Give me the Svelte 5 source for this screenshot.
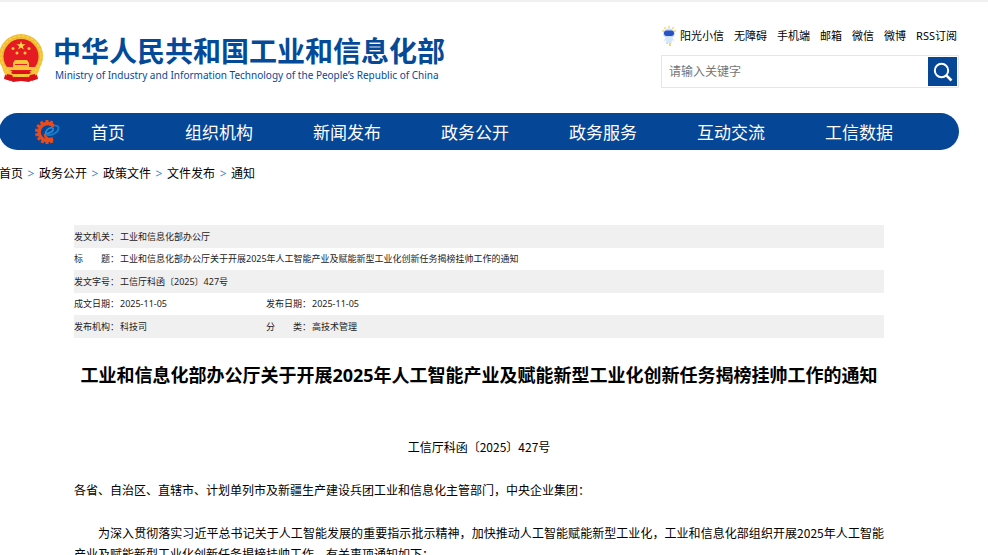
<script lang="ts">
	const quickLinks = ["阳光小信", "无障碍", "手机端", "邮箱", "微信", "微博", "RSS订阅"]
	const navItems = ["首页", "组织机构", "新闻发布", "政务公开", "政务服务", "互动交流", "工信数据"]
	const crumbs = ["首页", "政务公开", "政策文件", "文件发布", "通知"]

	type Field = { label: string, value: string }

	const fields: Field[][] = [
		[{ label: "发文机关：", value: "工业和信息化部办公厅" }],
		[{ label: "标　　题：", value: "工业和信息化部办公厅关于开展2025年人工智能产业及赋能新型工业化创新任务揭榜挂帅工作的通知" }],
		[{ label: "发文字号：", value: "工信厅科函〔2025〕427号" }],
		[{ label: "成文日期：", value: "2025-11-05" }, { label: "发布日期：", value: "2025-11-05" }],
		[{ label: "发布机构：", value: "科技司" }, { label: "分　　类：", value: "高技术管理" }],
	]

	// gear teeth, left open on the right where the swoosh leaves
	const teeth = [0, 25, 155, 180, 205, 230, 255, 280, 305, 330]

	let keyword = $state("")
</script>

<div class="page">
	<header>
		<a class="brand" href="#home">
			{@render emblem()}
			<span class="names">
				<strong>中华人民共和国工业和信息化部</strong>
				<span>Ministry of Industry and Information Technology of the People’s Republic of China</span>
			</span>
		</a>
		<div class="tools">
			<div class="quick">
				{@render mascot()}
				{#each quickLinks as link}
					<a href="#{link}">{link}</a>
				{/each}
			</div>
			<form class="search" onsubmit={(e) => e.preventDefault()}>
				<input type="text" aria-label="搜索" placeholder="请输入关键字" bind:value={keyword} />
				<button aria-label="搜索">
					<svg viewBox="0 0 20 20" width="20" height="20" fill="none" stroke="#fff" stroke-width="2">
						<circle cx="8.5" cy="8.5" r="6.7" />
						<path d="M13.3 13.3 18.5 18.5" stroke-width="2.6" />
					</svg>
				</button>
			</form>
		</div>
	</header>

	<nav class="main-nav">
		{@render gear()}
		{#each navItems as item}
			<a href="#{item}">{item}</a>
		{/each}
	</nav>

	<nav class="crumbs" aria-label="当前位置">
		{#each crumbs as crumb, i}
			{#if i > 0}<span>&gt;</span>{/if}
			<a href="#{crumb}">{crumb}</a>
		{/each}
	</nav>

	<main>
		<table>
			<colgroup><col class="key"><col class="short"><col class="key"><col></colgroup>
			<tbody>
				{#each fields as row}
					<tr>
						{#each row as field}
							<th scope="row">{field.label}</th>
							<td colspan={row.length === 1 ? 3 : 1}>{field.value}</td>
						{/each}
					</tr>
				{/each}
			</tbody>
		</table>

		<h1>工业和信息化部办公厅关于开展2025年人工智能产业及赋能新型工业化创新任务揭榜挂帅工作的通知</h1>

		<article lang="zh-CN">
			<p class="number">工信厅科函〔2025〕427号</p>
			<p>各省、自治区、直辖市、计划单列市及新疆生产建设兵团工业和信息化主管部门，中央企业集团：</p>
			<p class="indent">为深入贯彻落实习近平总书记关于人工智能发展的重要指示批示精神，加快推动人工智能赋能新型工业化，工业和信息化部组织开展2025年人工智能产业及赋能新型工业化创新任务揭榜挂帅工作。有关事项通知如下：</p>
		</article>
	</main>
</div>

{#snippet emblem()}
	<svg class="emblem" viewBox="0 0 44 49" width="44" height="49" aria-hidden="true">
		<path d="M7 36 5 45l6 1 3 2 8-1 8 1 3-2 6-1-2-9z" fill="#d9121a" />
		<circle cx="22" cy="22" r="22" fill="#efbd2f" />
		<circle cx="22" cy="22" r="20" fill="none" stroke="#f7d050" stroke-width="1.5" stroke-dasharray="3 1.5" />
		<circle cx="22" cy="22.500" r="17.500" fill="#e41b22" />
		<path d="m22 7 1.100 3.200h3.400l-2.700 2 1 3.300-2.800-2-2.800 2 1-3.300-2.700-2h3.400z" fill="#ffdf43" />
		<g fill="#f9c63a">
			<circle cx="14" cy="14.500" r="1.500" /><circle cx="30" cy="14.500" r="1.500" />
			<circle cx="18" cy="19" r="1.500" /><circle cx="26" cy="19" r="1.500" />
			<path d="M16 26h12l2 3H14zM14 29h16v4H14zM7 33h30l-2 3H9z" />
			<path d="M3 32c4 5 8 7 12 6h14c4 1 8-1 12-6-1 7-4 11-9 13l-4-3H16l-4 3C7 43 4 39 3 32z" />
		</g>
		<path d="M14 37h16l2 2-2 1H14l-2-1zM8 40l5 1 2 4-4 2-5-2zM36 40l-5 1-2 4 4 2 5-2zM17 43h10l2 4H15z" fill="#d9121a" />
		<path d="M16 30.500h12" stroke="#e41b22" />
	</svg>
{/snippet}

{#snippet mascot()}
	<svg class="mascot" viewBox="0 0 14 20" width="14" height="20" aria-hidden="true">
		<g fill="#f8d66a">
			<circle cx="3" cy="2" r="1" /><circle cx="7" cy="1" r="1" /><circle cx="11" cy="2" r="1" />
			<circle cx="1" cy="5" r="1" /><circle cx="13" cy="5" r="1" />
			<path d="M4 15h2v3H4zM7 16h2v4H7z" />
		</g>
		<ellipse cx="7" cy="7.500" rx="6" ry="5" fill="#c9dcf6" />
		<rect x="2" y="4.500" width="10" height="5.500" rx="2.700" fill="#2852c4" />
		<path d="M4 11h6l3 5-3-2v3H4v-3l-3 2z" fill="#d7e7f8" />
	</svg>
{/snippet}

{#snippet gear()}
	<svg class="gear" viewBox="0 0 26 26" width="26" height="26" fill="none" aria-hidden="true">
		<g fill="#e84c1e">
			{#each teeth as angle}
				<rect x="10.500" y="1" width="3" height="4" transform="rotate({angle} 12 13)" />
			{/each}
		</g>
		<path d="M19 7.500A8.500 8.500 0 1 0 17.500 20" stroke="#e84c1e" stroke-width="3.500" />
		<path d="M10 15c0 4 3.500 6 8 4.500" stroke="#e84c1e" stroke-width="2.500" />
		<path d="M10.500 15.500c-.5-3.500 2.500-6.300 5.500-6.700 2.700-.2 3 2.200 1 3.700-1.800 1.400-4 2-6.500 2.200" stroke="#2a8fd8" stroke-width="1.600" />
		<path d="M11 15.500c5 2 12.500-2 12.500-6.500 0-1.800-1.700-2.600-3.500-2.200" stroke="#1878c4" stroke-width="2" />
	</svg>
{/snippet}

<style>
	:global(body) {
		margin: 0;
		background: #fff;
		border-top: 2px solid #f0f0f0;
		font-family: "Noto Sans", "Noto Sans CJK SC", sans-serif;
		color: #000;
	}

	a {
		color: inherit;
		text-decoration: none;
	}

	/* the page box hangs slightly over the left edge of the window */
	.page {
		margin: 0 29px 0 -1px;
	}

	header {
		display: flex;
		justify-content: space-between;
		align-items: flex-start;
		height: 87px;
		padding: 24px 2px 0 0;
	}

	.brand {
		display: flex;
		gap: 10px;
		padding-top: 8px;
		color: #054a98;
		white-space: nowrap;
	}

	.names {
		display: flex;
		flex-direction: column;

		& strong {
			font-size: 28px;
			line-height: 34px;
		}

		& span {
			font-size: 10px;
			line-height: 14px;
			padding-left: 2px;
		}
	}

	.tools {
		width: 296px;
	}

	.quick {
		display: flex;
		justify-content: flex-end;
		align-items: center;
		gap: 10px;
		font-size: 11px;
		line-height: 20px;
		white-space: nowrap;
	}

	.mascot {
		margin-right: -6px;
	}

	.search {
		display: flex;
		align-items: center;
		box-sizing: border-box;
		height: 33px;
		margin: 9px -2px 0 0;
		padding-right: 1px;
		border: 1px solid #e6e6e6;

		& input {
			flex: 1;
			min-width: 0;
			padding: 0 7px;
			border: none;
			outline: none;
			font: 12px/20px "Noto Sans", "Noto Sans CJK SC", sans-serif;

			&::placeholder { color: #757575; }
		}

		& button {
			display: grid;
			place-items: center;
			width: 29px;
			height: 29px;
			padding: 0;
			border: none;
			background: #054696;
		}
	}

	.main-nav {
		display: flex;
		align-items: center;
		gap: 60px;
		height: 37px;
		padding-left: 36px;
		border-radius: 19px;
		background: #054696;
		color: #fff;
		font-size: 17px;
		white-space: nowrap;
	}

	.gear {
		margin-right: -30px;
	}

	.crumbs {
		display: flex;
		margin-top: 14px;
		font-size: 12px;
		line-height: 20px;

		& span {
			width: 16px;
			text-align: center;
			color: #4c86b8;
		}
	}

	main {
		padding: 41px 75px 0;
	}

	table {
		width: 100%;
		table-layout: fixed;
		border-collapse: collapse;
		font-size: 9px;
		line-height: 22px;
		color: #222;
	}

	.key { width: 46px; }
	.short { width: 146px; }

	th, td {
		height: 22px;
		padding: 0;
		font-weight: normal;
		text-align: left;
		white-space: nowrap;
	}

	tr:nth-child(odd) {
		background: #f0f0f0;

		& th, & td { height: 23px; }
	}

	h1 {
		margin: 23px 0 47px;
		font-size: 18px;
		line-height: 28px;
		text-align: center;
		white-space: nowrap;
	}

	article {
		font-family: "Noto Sans CJK SC", sans-serif;
		font-size: 12px;
		line-height: 21px;
		text-align: justify;
	}

	p {
		margin: 0 0 22px;
	}

	.number { text-align: center; }
	.indent { text-indent: 24px; }
</style>
